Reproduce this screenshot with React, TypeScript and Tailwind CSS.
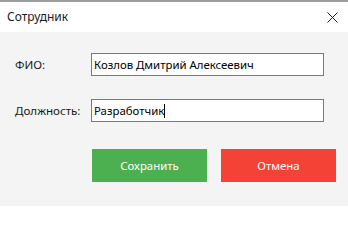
import React from "react";

export default function App() {
  const font = { fontFamily: '"Noto Sans", "Open Sans", sans-serif' };
  return (
    <div className="w-[348px] h-[206px] bg-[#f4f4f4] flex flex-col overflow-hidden" style={font}>
      <div className="h-[2px] bg-[#9c9c9c]" />
      <div className="h-[30px] bg-white flex items-center justify-between pl-[7px] pr-[10px]">
        <span className="text-[12px] text-[#1a1a1a] leading-none">Сотрудник</span>
        <svg width="11" height="11" viewBox="0 0 11 11" className="mt-[1px]">
          <path d="M0.5 0.5 L10.5 10.5 M10.5 0.5 L0.5 10.5" stroke="#1a1a1a" strokeWidth="1" />
        </svg>
      </div>
      <div className="flex flex-col pt-[21px] pl-[15px]">
        <div className="flex items-center h-[23px]">
          <span className="w-[76px] text-[11.6px] text-[#1a1a1a]">ФИО:</span>
          <div className="w-[233px] h-[23px] bg-white border border-[#7a7a7a] flex items-center pl-[2px] text-[11.4px] text-black">
            Козлов Дмитрий Алексеевич
          </div>
        </div>
        <div className="flex items-center h-[23px] mt-[23px]">
          <span className="w-[76px] text-[11.6px] text-[#1a1a1a]">Должность:</span>
          <div className="w-[233px] h-[23px] bg-white border border-[#7a7a7a] flex items-center pl-[2px] text-[11.4px] text-black">
            Разработчик<span className="inline-block w-px h-[14px] bg-black" />
          </div>
        </div>
        <div className="flex gap-[14px] mt-[27px] pl-[77px]">
          <div className="w-[115px] h-[33px] bg-[#4caf50] text-white text-[11.4px] flex items-center justify-center">
            Сохранить
          </div>
          <div className="w-[115px] h-[33px] bg-[#f44336] text-white text-[11.4px] flex items-center justify-center">
            Отмена
          </div>
        </div>
      </div>
    </div>
  );
}
